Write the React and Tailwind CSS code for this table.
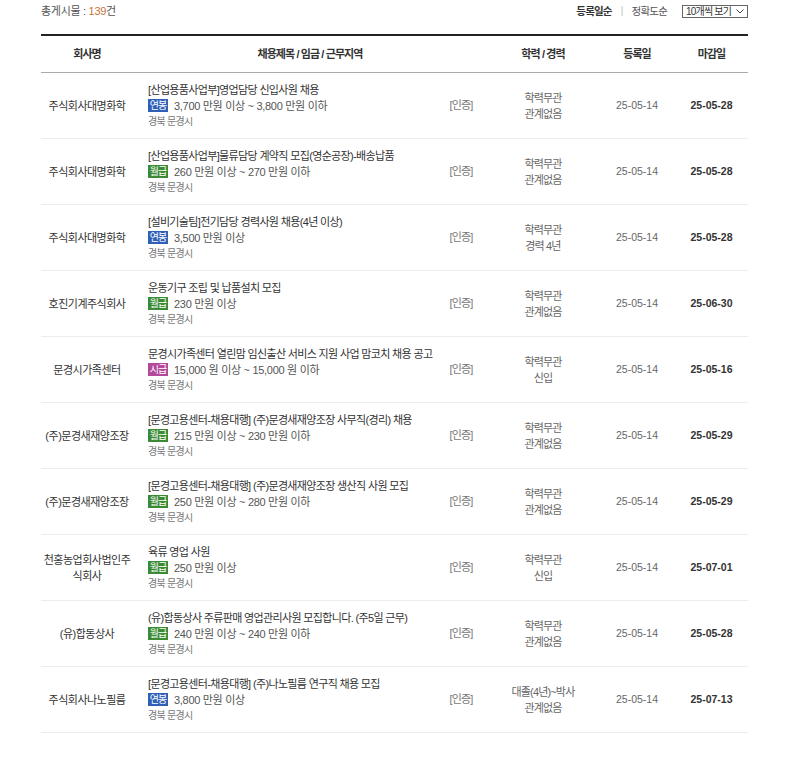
import React from "react";

const badgeColors = {
  연봉: "bg-[#2f5fb6]",
  월급: "bg-[#3b8a34]",
  시급: "bg-[#b4489a]",
};

const jobs = [
  { company: "주식회사대명화학", title: "[산업용품사업부]영업담당 신입사원 채용", pay: "연봉", amount: "3,700 만원 이상 ~ 3,800 만원 이하", edu: "학력무관", exp: "관계없음", end: "25-05-28" },
  { company: "주식회사대명화학", title: "[산업용품사업부]물류담당 계약직 모집(영순공장)-배송납품", pay: "월급", amount: "260 만원 이상 ~ 270 만원 이하", edu: "학력무관", exp: "관계없음", end: "25-05-28" },
  { company: "주식회사대명화학", title: "[설비기술팀]전기담당 경력사원 채용(4년 이상)", pay: "연봉", amount: "3,500 만원 이상", edu: "학력무관", exp: "경력 4년", end: "25-05-28" },
  { company: "호진기계주식회사", title: "운동기구 조립 및 납품설치 모집", pay: "월급", amount: "230 만원 이상", edu: "학력무관", exp: "관계없음", end: "25-06-30" },
  { company: "문경시가족센터", title: "문경시가족센터 열린맘 임신출산 서비스 지원 사업 맘코치 채용 공고", pay: "시급", amount: "15,000 원 이상 ~ 15,000 원 이하", edu: "학력무관", exp: "신입", end: "25-05-16" },
  { company: "(주)문경새재양조장", title: "[문경고용센터-채용대행] (주)문경새재양조장 사무직(경리) 채용", pay: "월급", amount: "215 만원 이상 ~ 230 만원 이하", edu: "학력무관", exp: "관계없음", end: "25-05-29" },
  { company: "(주)문경새재양조장", title: "[문경고용센터-채용대행] (주)문경새재양조장 생산직 사원 모집", pay: "월급", amount: "250 만원 이상 ~ 280 만원 이하", edu: "학력무관", exp: "관계없음", end: "25-05-29" },
  { company: ["천홍농업회사법인주", "식회사"], title: "육류 영업 사원", pay: "월급", amount: "250 만원 이상", edu: "학력무관", exp: "신입", end: "25-07-01" },
  { company: "(유)합동상사", title: "(유)합동상사 주류판매 영업관리사원 모집합니다. (주5일 근무)", pay: "월급", amount: "240 만원 이상 ~ 240 만원 이하", edu: "학력무관", exp: "관계없음", end: "25-05-28" },
  { company: "주식회사나노필름", title: "[문경고용센터-채용대행] (주)나노필름 연구직 채용 모집", pay: "연봉", amount: "3,800 만원 이상", edu: "대졸(4년)~박사", exp: "관계없음", end: "25-07-13" },
];

const cols = "grid grid-cols-[92px_354px_112px_76px_73px]";

function JobRow({ job }) {
  return (
    <div className={`${cols} h-[66px] items-center border-b border-[#ececec]`}>
      <div className="text-center text-[11px] leading-[16px] tracking-[-0.5px] text-[#333] whitespace-nowrap">
        {Array.isArray(job.company) ? (
          <>
            {job.company[0]}
            <br />
            {job.company[1]}
          </>
        ) : (
          job.company
        )}
      </div>
      <div className="flex items-center justify-between pl-[15px]">
        <div className="flex flex-col">
          <div className="text-[11px] leading-[16px] tracking-[-0.65px] text-[#333] whitespace-nowrap">{job.title}</div>
          <div className="flex items-center gap-[6px] text-[11px] leading-[16px] tracking-[-0.3px] text-[#555] whitespace-nowrap">
            <span className={`${badgeColors[job.pay]} text-white text-[10px] leading-[13px] h-[13px] w-[20px] tracking-[-0.9px] inline-flex items-center justify-center`}>
              {job.pay}
            </span>
            <span>{job.amount}</span>
          </div>
          <div className="text-[10px] leading-[16px] tracking-[-0.7px] text-[#777]">경북 문경시</div>
        </div>
        <div className="w-[52px] shrink-0 text-center text-[11px] tracking-[-0.8px] text-[#777]">[인증]</div>
      </div>
      <div className="text-center text-[11px] leading-[16px] tracking-[-0.85px] text-[#666] whitespace-nowrap">
        <div>{job.edu}</div>
        <div>{job.exp}</div>
      </div>
      <div className="text-center text-[10.5px] text-[#666]">25-05-14</div>
      <div className="text-center text-[10.5px] font-bold text-[#333]">{job.end}</div>
    </div>
  );
}

export default function App() {
  return (
    <div className="min-h-screen bg-white pb-10 font-['Liberation_Sans','Noto_Sans_CJK_KR',sans-serif]">
      <div className="ml-[41px] w-[707px]">
        {/* 상단 정렬 바 */}
        <div className="flex h-[34px] items-start justify-between pt-[4px]">
          <div className="text-[11px] leading-[14px] tracking-[-0.3px] text-[#555]">
            총게시물 : <span className="text-[#c8743a]">139</span>건
          </div>
          <div className="flex items-center text-[10.5px] leading-[14px] tracking-[-0.8px]">
            <span className="font-bold text-[#333]">등록일순</span>
            <span className="mx-[9px] text-[10px] text-[#bbb]">|</span>
            <span className="text-[#555]">정확도순</span>
            <div className="ml-[15px] mt-[1px] flex h-[13px] w-[66px] items-center justify-between border border-[#666] pl-[3px] pr-[3px] text-[10px] leading-[11px] tracking-[-0.8px] whitespace-nowrap text-[#333]">
              <span>10개씩 보기</span>
              <svg width="8" height="5" viewBox="0 0 8 5" fill="none">
                <path d="M0.5 0.5 L4 4 L7.5 0.5" stroke="#444" strokeWidth="1" />
              </svg>
            </div>
          </div>
        </div>

        {/* 헤더 */}
        <div className={`${cols} h-[39px] items-center border-t-2 border-b border-t-[#222] border-b-[#aaa] text-[11px] font-bold tracking-[-0.9px] text-[#333]`}>
          <div className="text-center">회사명</div>
          <div className="text-center">채용제목 / 임금 / 근무지역</div>
          <div className="text-center">학력 / 경력</div>
          <div className="text-center">등록일</div>
          <div className="text-center">마감일</div>
        </div>

        {jobs.map((job, i) => (
          <JobRow key={i} job={job} />
        ))}
      </div>
    </div>
  );
}
